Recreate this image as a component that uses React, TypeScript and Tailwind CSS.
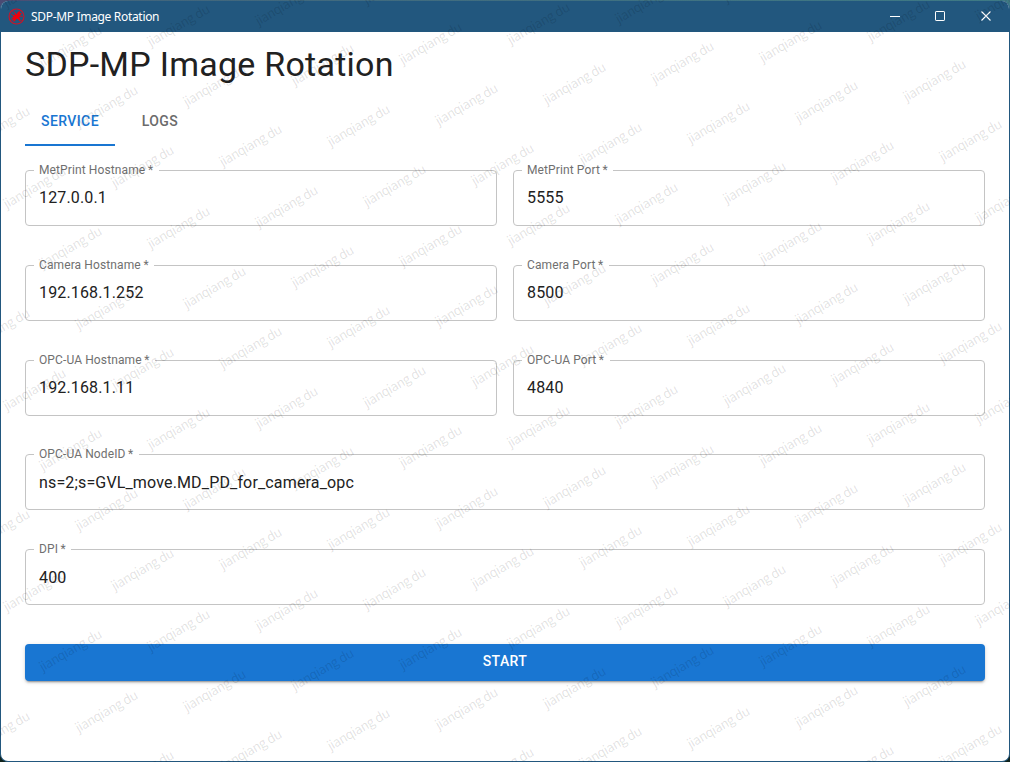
import React from "react";

function Field({ label, value, valuePad = "pt-[10px]" }: { label: string; value: string; valuePad?: string }) {
  return (
    <fieldset className="h-[61px] min-w-0 flex-1 rounded-[4px] border border-[#c4c4c4] px-2">
      <legend className="h-[11px] pr-[5.5px] pl-[5px] text-[12px] leading-[11px] tracking-[0.113px] whitespace-nowrap text-[#707070]">
        {label}
        <span>{"\u2009*"}</span>
      </legend>
      <div className={"px-[5px] text-[16px] leading-[23px] tracking-[0.15px] text-[#212121] " + valuePad}>{value}</div>
    </fieldset>
  );
}

function AppIcon() {
  return (
    <svg className="ml-[8px] h-[17px] w-[17px]" viewBox="0 0 17 17" fill="none">
      <circle cx="8.5" cy="8.5" r="7.5" stroke="#d01226" strokeWidth="1.1" />
      <path
        d="M6 3l1.6 2.2 1.2 1.1 1-2.2 2-1 .3 1.8 1.7.6-1.6 1.8.6 1.4-1.8.3 1.2 2.2-.6 2.2-1.4-2.2-1.6-.5-1 1.6-2.3 2 .5-2.4-2.2.6 1.8-2.2-1.8-.6 2.4-1.2-2.4-1.8 2.8.2 1 .6-.9-2.2z"
        fill="#f0000c"
      />
      <path d="M2.8 6l1.6.8M3.2 11l1.6-.8M12 12.5l1.6.2M5.5 3l-1.3 1M13 8.5h1.6" stroke="#d80a18" strokeWidth=".8" />
    </svg>
  );
}

const marks: { x: number; y: number }[] = [];
for (let i = -9; i <= 6; i++) {
  for (let j = -8; j <= 14; j++) {
    const x = 718 + 108 * i + 36 * j;
    const y = 122 - 20.9 * i + 60.2 * j;
    if (x > -32 && x < 1042 && y > -20 && y < 782) marks.push({ x, y });
  }
}

function Watermark() {
  return (
    <div className="pointer-events-none absolute inset-0 overflow-hidden" aria-hidden="true">
      {marks.map((m, k) => (
        <span
          key={k}
          className="absolute flex h-4 w-20 items-center justify-center font-['Noto_Sans_CJK_SC',sans-serif] text-[13px] leading-4 tracking-[-0.5px] whitespace-nowrap text-black/12"
          style={{ left: m.x - 40, top: m.y - 8, transform: "rotate(-30deg)" }}
        >
          jianqiang du
        </span>
      ))}
    </div>
  );
}

export default function App() {
  return (
    <div className="relative h-[762px] w-[1010px] overflow-hidden bg-[linear-gradient(to_right,#4b4a73_0,#42657c_120px,#3e7a85_100%)] pt-px font-[Roboto,sans-serif]">
      <div className="h-[761px] bg-[linear-gradient(to_bottom,transparent_50%,#10231c_50%)]">
        <div className="flex h-[761px] flex-col overflow-hidden rounded-[8px] border-x border-b border-[#22577e] bg-white">
          <header className="-mx-px flex h-[31px] shrink-0 items-center bg-[#22577e] text-white">
            <AppIcon />
            <span className="ml-[6px] font-['Noto_Sans',sans-serif] text-[12px] leading-4 tracking-[-0.32px]">SDP-MP Image Rotation</span>
            <svg className="ml-auto h-[31px] w-[138px]" viewBox="0 0 138 31" fill="none" stroke="white">
              <path d="M18 15.5h10" />
              <rect x="63.5" y="10.5" width="9" height="9" rx="0.6" />
              <path d="M109.5 10.5l9 9M118.5 10.5l-9 9" strokeWidth="1.1" />
            </svg>
          </header>
          <main className="px-6 pt-[11px]">
            <h1 className="text-[34px] leading-[42px] tracking-[0.25px] text-[#212121]">SDP-MP Image Rotation</h1>
            <nav className="mt-[13px] flex h-[48px] text-[14px] font-medium tracking-[0.4px]">
              <div className="flex w-[90px] items-center justify-center border-b-2 border-[#1976d2] text-[#1976d2]">SERVICE</div>
              <div className="flex w-[90px] items-center justify-center pb-[2px] text-[#6b6b6b]">LOGS</div>
            </nav>
            <form className="pt-[19px]">
              <div className="mb-[34px] flex gap-4">
                <Field label="MetPrint Hostname" value="127.0.0.1" />
                <Field label="MetPrint Port" value="5555" />
              </div>
              <div className="mb-[34px] flex gap-4">
                <Field label="Camera Hostname" value="192.168.1.252" />
                <Field label="Camera Port" value="8500" />
              </div>
              <div className="mb-[33px] flex gap-4">
                <Field label="OPC-UA Hostname" value="192.168.1.11" />
                <Field label="OPC-UA Port" value="4840" />
              </div>
              <div className="mb-[34px] flex">
                <Field label="OPC-UA NodeID" value="ns=2;s=GVL_move.MD_PD_for_camera_opc" valuePad="pt-[11px]" />
              </div>
              <div className="mb-[39px] flex">
                <Field label="DPI" value="400" valuePad="pt-[11px]" />
              </div>
              <button
                type="button"
                className="block h-[37px] w-full rounded-[4px] bg-[#1976d2] pb-[3px] text-[14px] font-medium tracking-[0.4px] text-white shadow-[0_3px_1px_-2px_rgba(0,0,0,0.2),0_2px_2px_0_rgba(0,0,0,0.14),0_1px_5px_0_rgba(0,0,0,0.12)]"
              >
                START
              </button>
            </form>
          </main>
        </div>
      </div>
      <Watermark />
    </div>
  );
}
